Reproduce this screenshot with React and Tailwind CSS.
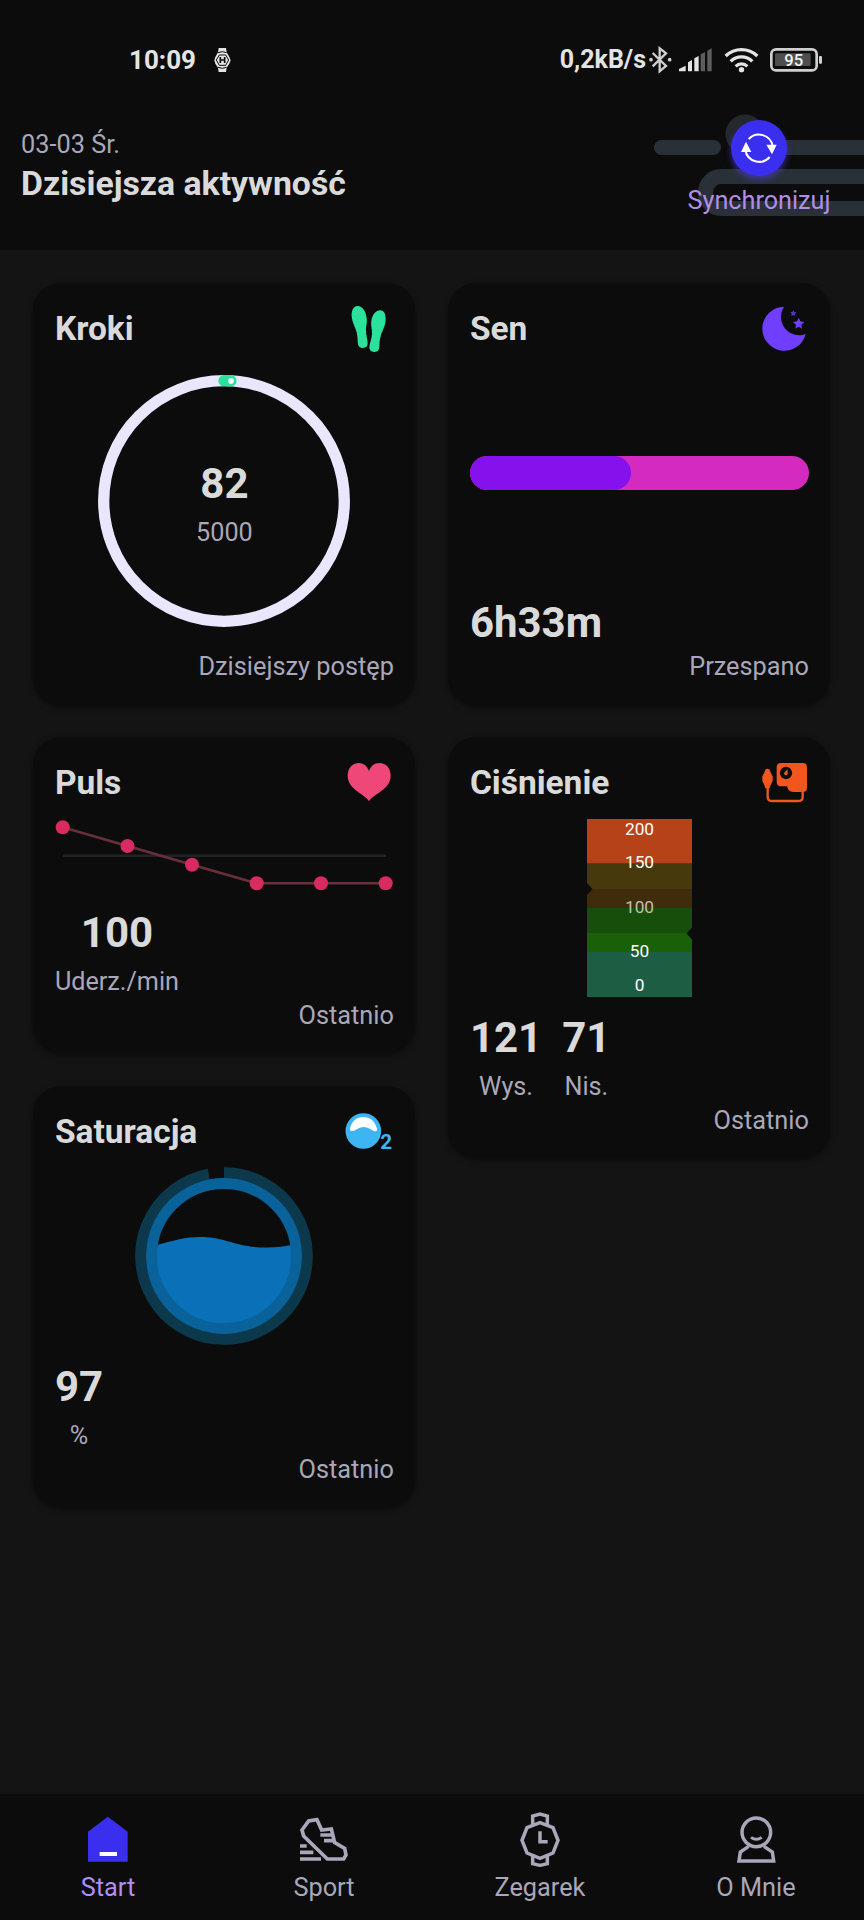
const GREY = "#a9a7b9";

/* ---------- Status bar ---------- */

function StatusBar() {
  return (
    <div className="flex h-[122px] items-center pr-[41px] pb-[2px] pl-[129px] text-[26px] leading-[30px] font-bold text-[#e4e4e4]">
      <span>10:09</span>
      <svg className="ml-[18px] h-[26px] w-[17px]" viewBox="0 0 51 78">
        <path
          d="M14 3H36L38 16L46 30L50 40L46 50L38 62L36 75H14L12 62L4 50L1 40L4 30L12 16Z"
          fill="#e4e4e4"
        />
        <path
          d="M12 17Q25 11 38 17M12 61Q25 67 38 61"
          fill="none"
          stroke="#0c0c0c"
          strokeWidth="3"
        />
        <path
          d="M16 24H35L44 39L35 55H16L7 39Z"
          fill="none"
          stroke="#0c0c0c"
          strokeWidth="3"
        />
        <path
          d="M19 30V48M32 30V48M19 39H32"
          fill="none"
          stroke="#0c0c0c"
          strokeWidth="5"
        />
      </svg>

      <span className="ml-auto text-[25px]">0,2kB/s</span>
      <svg className="ml-[3px] h-[28px] w-[23px]" viewBox="0 0 69 84">
        <path
          d="M11 21L51 60L32 76V7L51 22L11 61"
          fill="none"
          stroke="#cfcfcf"
          strokeWidth="7"
        />
        <circle cx="6" cy="41" r="5.5" fill="#cfcfcf" />
        <circle cx="62" cy="41" r="5.5" fill="#cfcfcf" />
      </svg>
      <svg className="ml-[7px] h-[24px] w-[33px]" viewBox="0 0 99 72">
        <path
          d="M0 70V63L20 53V70ZM27 70V43L39 36V70ZM46 70V31L59 24V70Z"
          fill="#e4e4e4"
        />
        <path d="M65 70V19L78 12V70ZM85 70V8L98 1V70Z" fill="#5d5d5d" />
      </svg>
      <svg className="ml-[12px] h-[26px] w-[35px]" viewBox="0 0 105 78">
        <g fill="none" stroke="#e4e4e4" strokeWidth="10">
          <path d="M5 27A68 68 0 0 1 100 27" />
          <path d="M20 43A46 46 0 0 1 85 43" />
          <path d="M35 58A25 25 0 0 1 70 58" />
        </g>
        <circle cx="52.5" cy="68" r="8" fill="#e4e4e4" />
      </svg>
      <svg className="ml-[11px] h-[24px] w-[53px]" viewBox="0 0 159 72">
        <rect
          x="4"
          y="4"
          width="136"
          height="63"
          rx="14"
          fill="none"
          stroke="#cfcfcf"
          strokeWidth="8"
        />
        <rect x="15" y="16" width="107" height="38" rx="4" fill="#4e4e4e" />
        <rect x="147" y="24" width="9" height="23" rx="3" fill="#cfcfcf" />
        <text
          x="71"
          y="53"
          textAnchor="middle"
          fontSize="50"
          fontWeight="500"
          fill="#f2f2f2"
        >
          95
        </text>
      </svg>
    </div>
  );
}

/* ---------- Header ---------- */

function SyncButton() {
  return (
    <button className="relative mt-[-2px] flex flex-col items-center">
      <span className="flex h-[56px] w-[56px] rounded-full bg-[#3a2fee] shadow-[0_4px_6px_rgba(80,60,230,0.55)]">
        <svg className="h-[56px] w-[56px]" viewBox="0 0 168 168">
          <g fill="none" stroke="#fff" strokeWidth="6">
            <path d="M53 57A42 42 0 0 1 125 78" />
            <path d="M116 111A42 42 0 0 1 43 90" />
          </g>
          <path d="M106 74H137L123 103ZM30 96H61L45 65Z" fill="#fff" />
        </svg>
      </span>
      <span className="mt-[10px] text-[25.2px] leading-[30px] text-[#b08ee8]">
        Synchronizuj
      </span>
    </button>
  );
}

function Header() {
  return (
    <header className="relative h-[250px] bg-[#0c0c0c]">
      <StatusBar />
      {/* decorative track behind the sync button */}
      <svg
        className="absolute top-[110px] right-0 h-[110px] w-[214px]"
        viewBox="650 110 214 110"
      >
        <circle cx="745" cy="134" r="19.5" fill="#25282c" />
        <g fill="#2a3038">
          <rect x="654" y="140" width="67" height="15" rx="7.5" />
          <rect x="760" y="140" width="110" height="15" />
        </g>
        <path
          d="M870 176.5H721A15.5 16 0 0 0 721 208.5H870"
          fill="none"
          stroke="#2a3038"
          strokeWidth="15"
        />
      </svg>
      <div className="flex items-start justify-between pr-[33.5px] pl-[21px]">
        <div className="pt-[8px]">
          <p className="text-[25.3px] leading-[30px] text-[#a9a7b9]">
            03-03 Śr.
          </p>
          <h1 className="mt-[5px] text-[33.8px] leading-[38px] font-bold text-[#dadada]">
            Dzisiejsza aktywność
          </h1>
        </div>
        <SyncButton />
      </div>
    </header>
  );
}

/* ---------- Card pieces ---------- */

function Card({ title, icon, footer, className, children }) {
  return (
    <section
      className={`flex flex-col rounded-[28px] bg-[#0c0c0c] px-[21.5px] pt-[22px] shadow-[0_3px_6px_rgba(0,0,0,0.5)] ${className}`}
    >
      <div className="flex h-[48px] shrink-0 items-center justify-between">
        <h2 className="text-[33.5px] leading-[38px] font-bold text-[#dadada]">
          {title}
        </h2>
        <svg className="h-[48px] w-[48px] overflow-visible" viewBox="0 0 144 144">
          {icon}
        </svg>
      </div>
      {children}
      <p className="mt-[4px] text-right text-[25.3px] leading-[30px] text-[#a9a7b9]">
        {footer}
      </p>
    </section>
  );
}

function Value({ value, label }) {
  return (
    <div className="flex flex-col items-center">
      <span className="text-[42px] leading-[49px] font-bold text-[#dadada]">
        {value}
      </span>
      {label && (
        <span className="mt-[10px] text-[25.2px] leading-[30px] text-[#a9a7b9]">
          {label}
        </span>
      )}
    </div>
  );
}

const feetIcon = (
  <g fill="#2ae29b">
    <path d="M35 3C22 3 16 16 17 34C18 50 26 62 32 82C36 98 34 108 36 118C38 126 43 129 50 129C60 129 65 124 65 115C65 105 60 90 60 75C60 62 64 55 62 40C60 20 50 3 35 3Z" />
    <path d="M102 16C88 16 78 32 76 48C74 64 79 72 78 88C77 104 70 116 70 128C71 137 77 141 86 141C95 141 99 136 100 127C101 115 100 105 105 90C110 74 119 62 119 42C119 26 113 16 102 16Z" />
  </g>
);

const moonIcon = (
  <g fill="#6f3eff">
    <path d="M69 5A66 66 0 1 0 134 87A55 55 0 0 1 69 5Z" />
    <path
      opacity="0.75"
      d="M97 15L100 21L106 22L102 27L103 33L97 30L91 33L92 27L88 22L94 21Z"
    />
    <path d="M113 38L118 49L130 51L121 59L123 71L113 65L103 71L105 59L96 51L108 49Z" />
  </g>
);

const heartIcon = (
  <path
    d="M69 127C58 105 5 92 5 50C5 27 20 12 38 12C52 12 64 20 69 37C74 20 86 12 100 12C120 12 134 27 134 50C134 92 80 105 69 127Z"
    fill="#ef4777"
  />
);

const pressureIcon = (
  <g>
    <path
      d="M60 12H125Q138 12 138 25V86Q138 99 125 99H96Q82 99 78 82H62Q47 82 47 68V25Q47 12 60 12Z"
      fill="#f0561d"
    />
    <circle cx="75" cy="42" r="18.5" fill="#0c0c0c" />
    <path d="M80 31L69 42A6 6 0 0 0 80 46Z" fill="#f0561d" />
    <path
      d="M13 32Q19 27 26 32Q28 40 35 52V66Q28 78 26 88H13Q11 78 4 66V52Q11 40 13 32Z"
      fill="#f0561d"
    />
    <path
      d="M20 85V114Q20 126 32 126H113Q125 126 125 114V97"
      fill="none"
      stroke="#f0561d"
      strokeWidth="7"
    />
  </g>
);

const oxygenIcon = (
  <g>
    <circle cx="52" cy="69" r="53.5" fill="#3db5f3" />
    <path
      d="M12 62C18 38 32 27 52 27C72 27 86 38 93 62C94 70 88 71 82 68C70 62 62 57 52 57C42 57 34 64 24 68C16 71 11 68 12 62Z"
      fill="#fff"
    />
    <text x="103" y="122" fontSize="62" fontWeight="700" fill="#3db5f3">
      2
    </text>
  </g>
);

/* ---------- Charts ---------- */

function StepsRing() {
  return (
    <div className="relative mt-[22px] mb-auto h-[252px] w-[252px] self-center">
      <svg className="h-[252px] w-[252px]" viewBox="0 0 252 252">
        <circle
          cx="126"
          cy="126"
          r="120.3"
          fill="none"
          stroke="#eae6fe"
          strokeWidth="11.3"
        />
        <path
          d="M126 5.7A120.3 120.3 0 0 1 133 5.9"
          fill="none"
          stroke="#2ae29b"
          strokeWidth="11.3"
          strokeLinecap="round"
        />
        <circle cx="133" cy="5.9" r="2.8" fill="#fff" />
      </svg>
      <div className="absolute inset-0 flex flex-col items-center justify-center pt-[5px]">
        <Value value="82" label="5000" />
      </div>
    </div>
  );
}

const pulsePoints = [
  [7.7, 15.3],
  [72.5, 34],
  [137, 52.7],
  [201.7, 71.3],
  [266, 71.3],
  [330.7, 71.3],
];

function PulseChart() {
  return (
    <svg className="mt-[5px] h-[86px] w-[339px]" viewBox="0 0 339 86">
      <path d="M7.7 43.7H331" stroke="#232326" strokeWidth="2.6" />
      <polyline
        points={pulsePoints.map((p) => p.join(",")).join(" ")}
        fill="none"
        stroke="#692f3d"
        strokeWidth="2.6"
      />
      {pulsePoints.map(([x, y]) => (
        <circle key={x} cx={x} cy={y} r="7" fill="#d82b60" />
      ))}
    </svg>
  );
}

const scale = [
  { label: "200", y: 15.5 },
  { label: "150", y: 49 },
  { label: "100", y: 93.5 },
  { label: "50", y: 138 },
  { label: "0", y: 171.5 },
];

function PressureScale() {
  return (
    <svg
      className="mt-[12px] h-[178px] w-[105px] self-center"
      viewBox="0 0 105 178"
    >
      <rect width="105" height="44.7" fill="#b64318" />
      <rect y="44.7" width="105" height="44.3" fill="#46390c" />
      <rect y="70" width="105" height="19" fill="#3f2c0b" />
      <rect y="89" width="105" height="44" fill="#1a6009" />
      <rect y="89" width="105" height="25" fill="#164f0b" />
      <rect y="133" width="105" height="45" fill="#1c5d43" />
      <path d="M0 64L5.5 70L0 76ZM105 108.5L99.5 114.5L105 120.5Z" fill="#0c0c0c" />
      {scale.map(({ label, y }) => (
        <text
          key={label}
          x="52.5"
          y={y}
          textAnchor="middle"
          fontSize="17.3"
          fill={label === "100" ? "#c3bfae" : "#fff"}
        >
          {label}
        </text>
      ))}
    </svg>
  );
}

function OxygenGauge() {
  return (
    <svg
      className="mt-[11px] h-[178px] w-[178px] self-center"
      viewBox="0 0 178 178"
    >
      <path
        d="M89 5.7A83.3 83.3 0 1 1 73.8 7.1"
        fill="none"
        stroke="#0c384b"
        strokeWidth="11"
      />
      <path
        d="M22.5 78C40 73 52 69.5 68 70C92 70.5 100 80.5 132 80.5C142 80.5 150 79.5 156 78A68 68 0 1 1 22.5 78Z"
        fill="#0a71b9"
      />
      <circle
        cx="89"
        cy="89"
        r="72.5"
        fill="none"
        stroke="#0a629a"
        strokeWidth="11"
      />
    </svg>
  );
}

/* ---------- Bottom navigation ---------- */

const tabs = [
  {
    label: "Start",
    active: true,
    icon: (
      <>
        <path d="M83.5 17L143 62V152H24V62Z" fill="#3a2fee" />
        <rect x="59" y="123" width="52" height="12" fill="#fff" />
      </>
    ),
  },
  {
    label: "Sport",
    icon: (
      <g fill="none" stroke={GREY} strokeWidth="11">
        <path d="M63 26L38 30L18 57L23 75L94 144H143L150 132L146 112L116 95L106 54L77 57Z" />
        <path d="M73 72H110M84 89H114M12 105H32M12 124H52M12 144H75" />
      </g>
    ),
  },
  {
    label: "Zegarek",
    icon: (
      <g fill="none" stroke={GREY} strokeWidth="10.5">
        <path d="M84 35L123 50L138 88L123 126L84 142L45 126L30 88L45 50Z" />
        <path d="M62 43V15L84 9L106 15V43M62 133V158L84 163L106 158V133" />
        <path d="M84 61V92H107" />
      </g>
    ),
  },
  {
    label: "O Mnie",
    icon: (
      <g fill="none" stroke={GREY} strokeWidth="10.5">
        <circle cx="85" cy="64" r="43" />
        <path d="M69 79Q85 91 101 79" strokeWidth="9" />
        <path d="M62 106L37 123L33 150H137L133 123L108 106" />
      </g>
    ),
  },
];

function BottomNav() {
  return (
    <nav className="mt-auto grid h-[126px] grid-cols-4 items-start bg-[#0c0c0c] pt-[17px]">
      {tabs.map(({ label, icon, active }) => (
        <button key={label} className="flex flex-col items-center">
          <svg className="h-[56px] w-[56px]" viewBox="0 0 168 168">
            {icon}
          </svg>
          <span
            className={`mt-[6px] text-[25.3px] leading-[30px] ${
              active ? "text-[#b08ef5]" : "text-[#a9a7b9]"
            }`}
          >
            {label}
          </span>
        </button>
      ))}
    </nav>
  );
}

export default function App() {
  return (
    <div className="flex h-[1920px] w-[864px] flex-col overflow-hidden bg-[#141414] font-[Roboto,sans-serif]">
      <Header />

      <main className="grid grid-cols-[382px_382px] items-start gap-[33px] px-[33.4px] pt-[33px]">
        <div className="flex flex-col gap-[33px]">
          <Card
            title="Kroki"
            icon={feetIcon}
            footer="Dzisiejszy postęp"
            className="h-[421px] pb-[22px]"
          >
            <StepsRing />
          </Card>

          <Card
            title="Puls"
            icon={heartIcon}
            footer="Ostatnio"
            className="mb-px h-[315px] pb-[21px]"
          >
            <PulseChart />
            <div className="mt-auto flex">
              <Value value="100" label="Uderz./min" />
            </div>
          </Card>

          <Card
            title="Saturacja"
            icon={oxygenIcon}
            footer="Ostatnio"
            className="h-[420px] pb-[21px]"
          >
            <OxygenGauge />
            <div className="mt-auto flex">
              <Value value="97" label="%" />
            </div>
          </Card>
        </div>

        <div className="flex flex-col gap-[33px]">
          <Card
            title="Sen"
            icon={moonIcon}
            footer="Przespano"
            className="h-[421px] pb-[22px]"
          >
            <div className="mt-[103px] h-[34px] overflow-hidden rounded-full bg-[#d42ac0]">
              <div className="h-full w-[161px] rounded-full bg-[#8512ec]" />
            </div>
            <div className="mt-auto mb-px flex">
              <Value value="6h33m" />
            </div>
          </Card>

          <Card
            title="Ciśnienie"
            icon={pressureIcon}
            footer="Ostatnio"
            className="h-[420px] pb-[21px]"
          >
            <PressureScale />
            <div className="mt-auto flex gap-[20px]">
              <Value value="121" label="Wys." />
              <Value value="71" label="Nis." />
            </div>
          </Card>
        </div>
      </main>

      <BottomNav />
    </div>
  );
}
